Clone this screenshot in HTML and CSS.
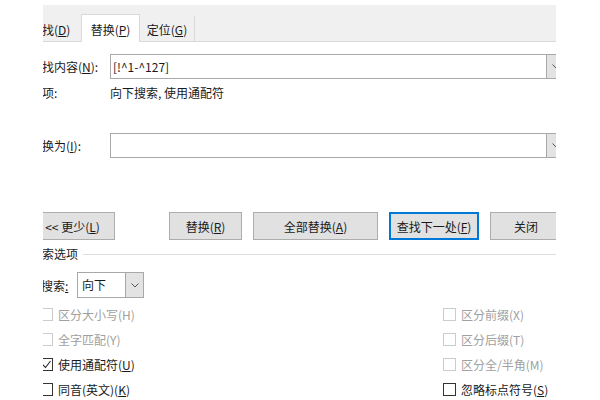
FILE: index.html
```html
<!DOCTYPE html>
<html lang="zh-CN">
<head>
    <meta charset="UTF-8">
    <title>查找和替换</title>
    <link rel="stylesheet" href="styles.css">
</head>
<body>

<div class="clip">
<div class="dialog">
    <div class="tabs">
        <div class="tab tab-find">查找(<u>D</u>)</div>
        <div class="tab active">替换(<u>P</u>)</div>
        <div class="tab tab-goto">定位(<u>G</u>)</div>
    </div>

    <div class="row find-row">
        <div class="label">查找内容(<u>N</u>):</div>
        <div class="combo">
            <div class="combo-text">[!^1-^127]</div>
            <div class="combo-btn"><svg width="8" height="5" viewBox="0 0 8 5"><polyline points="0.5,0.5 4,4 7.5,0.5" fill="none" stroke="#555" stroke-width="1"/></svg></div>
        </div>
    </div>

    <div class="row options-row">
        <div class="label">选项:</div>
        <div>向下搜索, 使用通配符</div>
    </div>

    <div class="row replace-row">
        <div class="label">替换为(<u>I</u>):</div>
        <div class="combo">
            <div class="combo-text"></div>
            <div class="combo-btn"><svg width="8" height="5" viewBox="0 0 8 5"><polyline points="0.5,0.5 4,4 7.5,0.5" fill="none" stroke="#555" stroke-width="1"/></svg></div>
        </div>
    </div>

    <div class="buttons">
        <button class="btn btn-less">&lt;&lt; 更少(<u>L</u>)</button>
        <button class="btn btn-replace">替换(<u>R</u>)</button>
        <button class="btn btn-all">全部替换(<u>A</u>)</button>
        <button class="btn btn-next">查找下一处(<u>F</u>)</button>
        <button class="btn btn-close">关闭</button>
    </div>

    <div class="group-title">搜索选项</div>

    <div class="row search-row">
        <div class="search-label">搜索<u>:</u></div>
        <div class="select">
            <div class="select-text">向下</div>
            <div class="select-btn"><svg width="8" height="5" viewBox="0 0 8 5"><polyline points="0.5,0.5 4,4 7.5,0.5" fill="none" stroke="#555" stroke-width="1"/></svg></div>
        </div>
    </div>

    <div class="checks">
        <div class="check left disabled"><span class="box"></span>区分大小写(H)</div>
        <div class="check disabled"><span class="box"></span>区分前缀(X)</div>
        <div class="check left disabled"><span class="box"></span>全字匹配(Y)</div>
        <div class="check disabled"><span class="box"></span>区分后缀(T)</div>
        <div class="check left"><span class="box"><svg width="11" height="11" viewBox="0 0 11 11"><polyline points="1.5,5.5 4.5,8.5 9.5,2" fill="none" stroke="#222" stroke-width="1.1"/></svg></span>使用通配符(<u>U</u>)</div>
        <div class="check disabled"><span class="box"></span>区分全/半角(M)</div>
        <div class="check left"><span class="box"></span>同音(英文)(<u>K</u>)</div>
        <div class="check"><span class="box"></span>忽略标点符号(<u>S</u>)</div>
    </div>
</div>
</div>

</body>
</html>
```

FILE: styles.css
```css
body {
    margin: 0;
    background: #fff;
    font-family: "Noto Sans CJK SC", "Noto Sans", sans-serif;
    font-size: 12px;
    color: #1a1a1a;
}
u {
    text-decoration: underline;
    text-underline-offset: 1px;
}
.clip {
    margin: 5px 0 0 43px;
    width: 513px;
    height: 395px;
    overflow: hidden;
}
.dialog {
    margin-left: -13px;
    width: 580px;
}

/* tab strip */
.tabs {
    display: flex;
    align-items: flex-end;
    height: 36px;
    background: #f0f0f0;
    border-bottom: 1px solid #d9d9d9;
}
.tab {
    box-sizing: border-box;
    height: 25px;
    padding-top: 3px;
    line-height: 22px;
    text-align: center;
    white-space: nowrap;
}
.tab-find {
    width: 51px;
    text-align: left;
}
.tab.active {
    width: 59px;
    height: 28px;
    margin-bottom: -1px;
    padding-top: 4px;
    background: #fff;
    border: 1px solid #d9d9d9;
    border-bottom: none;
}
.tab-goto {
    width: 55px;
    border-right: 1px solid #d9d9d9;
}

/* fields */
.row {
    display: flex;
    align-items: center;
}
.label {
    width: 80px;
    flex: none;
    white-space: nowrap;
}
.find-row {
    margin-top: 12px;
    height: 25px;
}
.options-row {
    margin-top: 3px;
    height: 20px;
}
.replace-row {
    margin-top: 31px;
    height: 25px;
}
.combo {
    display: flex;
    width: 455px;
    height: 25px;
    box-sizing: border-box;
    border: 1px solid #a8a8a8;
}
.combo-text {
    flex: 1;
    padding-left: 2px;
    line-height: 23px;
}
.combo-btn, .select-btn {
    width: 17px;
    flex: none;
    display: flex;
    align-items: center;
    justify-content: center;
    background: #e3e3e3;
    border-left: 1px solid #a8a8a8;
}

/* buttons */
.buttons {
    display: flex;
    margin-top: 54px;
}
.btn {
    height: 28px;
    box-sizing: border-box;
    padding: 0;
    border: 1px solid #adadad;
    background: #e1e1e1;
    font: inherit;
    color: inherit;
    white-space: nowrap;
}
.btn-less {
    width: 85px;
}
.btn-replace {
    width: 73px;
    margin-left: 54px;
}
.btn-all {
    width: 125px;
    margin-left: 11px;
}
.btn-next {
    width: 90px;
    margin-left: 11px;
    border: 2px solid #0078d7;
}
.btn-close {
    width: 72px;
    margin-left: 11px;
}

/* search options */
.group-title {
    display: flex;
    align-items: center;
    margin-top: 4px;
    line-height: 20px;
}
.group-title::after {
    content: "";
    flex: 1;
    height: 1px;
    margin-left: 5px;
    background: #dcdcdc;
}
.search-row {
    margin-top: 8px;
    padding-left: 11px;
    height: 26px;
}
.search-label {
    width: 36px;
    flex: none;
}
.select {
    display: flex;
    width: 67px;
    height: 26px;
    box-sizing: border-box;
    border: 1px solid #a8a8a8;
}
.select-text {
    flex: 1;
    padding-left: 4px;
    line-height: 24px;
}
.checks {
    display: grid;
    grid-template-columns: 413px auto;
    grid-auto-rows: 25px;
    margin-top: 4px;
}
.check {
    display: flex;
    align-items: center;
    white-space: nowrap;
}
.check.left {
    padding-left: 10px;
}
.box {
    width: 13px;
    height: 13px;
    box-sizing: border-box;
    margin-right: 5px;
    border: 1px solid #333;
    display: flex;
    align-items: center;
    justify-content: center;
}
.check.disabled {
    color: #a0a0a0;
}
.check.disabled .box {
    border-color: #cccccc;
}
```
